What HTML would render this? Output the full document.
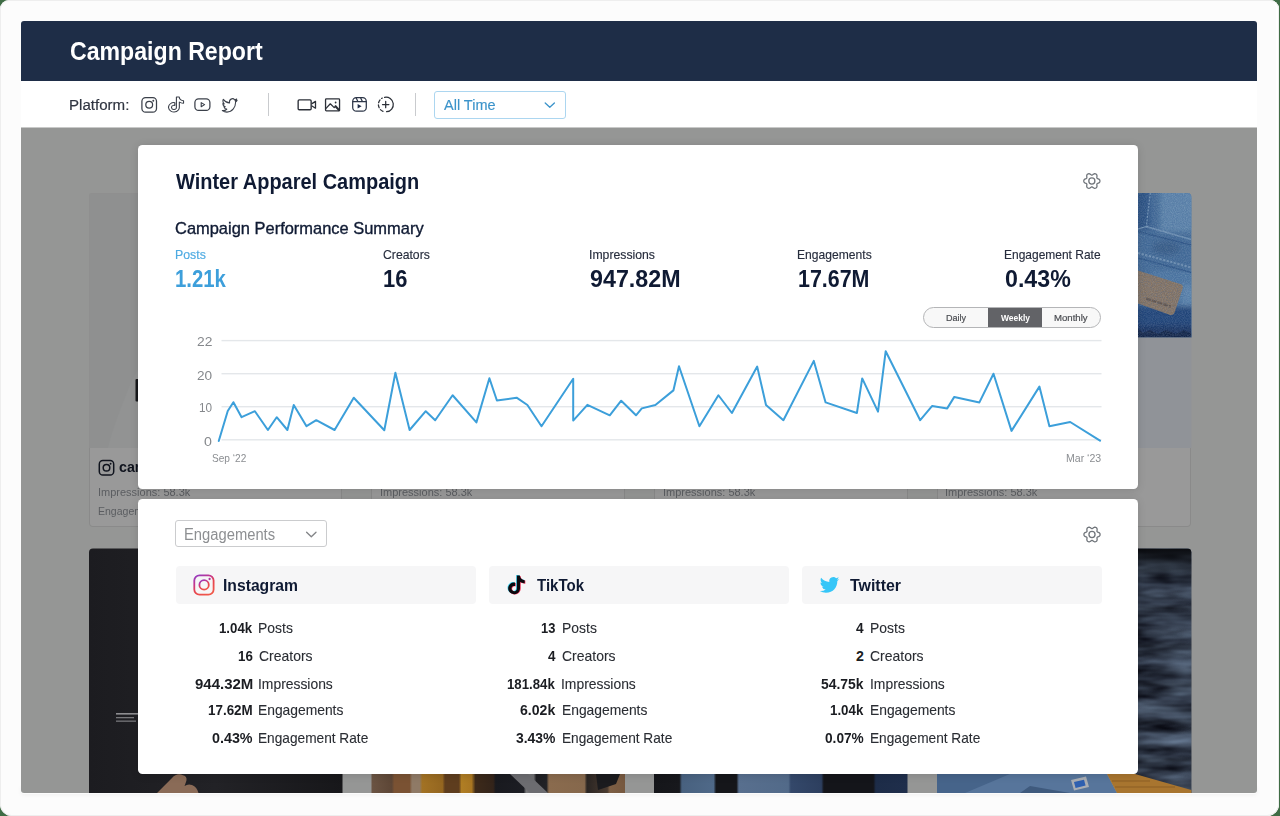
<!DOCTYPE html>
<html lang="en">
<head>
<meta charset="utf-8">
<title>Campaign Report</title>
<style>
html,body{margin:0;padding:0}
body{width:1280px;height:816px;overflow:hidden;background:#3f6c45;font-family:"Liberation Sans",sans-serif;position:relative}
.abs{position:absolute}
.t{position:absolute;white-space:nowrap;line-height:1;transform-origin:0 0;font-weight:400}
svg{position:absolute;left:0;top:0;overflow:visible}
.win{position:absolute;left:0;top:0;width:1279px;height:816px;background:#fcfcfc;border-radius:9px 9px 12px 12px;box-shadow:inset 0 0 0 1px #eeeeee,inset -3px 0 0 0 #ffffff}
.tbar{position:absolute;left:21px;top:81px;width:1236px;height:47px;background:#fff}
.hdr{position:absolute;left:21px;top:21px;width:1236px;height:60.4px;background:#1e2d47;border-radius:3px 3px 0 0}
.shadow{position:absolute;left:21px;top:786px;width:1236px;height:8px;border-radius:0 0 3px 3px;box-shadow:0 1px 4px rgba(0,0,0,.05)}
.panel{position:absolute;left:0;top:0;width:1280px;height:816px;clip-path:inset(127.6px 23px 23px 21px round 0 0 3px 3px)}
.pbg{position:absolute;left:21px;top:127px;width:1236px;height:666px;background:#f8faf8}
.bcard{position:absolute;top:193px;width:253.5px;height:334px;background:#fff;border-radius:4px;box-shadow:inset 0 0 0 1px #e6e7e6;overflow:hidden}
.bimg{position:absolute;left:0;top:0;width:100%;height:255px;background:#edeeee}
.bimg2{position:absolute;top:548.5px;width:253.5px;height:300px;border-radius:4px 4px 0 0;overflow:hidden}
.dim{position:absolute;left:21px;top:127px;width:1236px;height:666px;background:rgba(0,0,0,.4)}
.card{position:absolute;left:138px;width:1000.3px;background:#fff;border-radius:4.5px;box-shadow:0 1px 9px rgba(0,0,0,.13)}
.sel1{position:absolute;left:434px;top:91.2px;width:130px;height:25.4px;border:1px solid #acd6f0;border-radius:3px;background:#fff}
.vdiv{position:absolute;width:1px;background:#c9cbce;top:93px;height:23px}
.tog{position:absolute;left:923.2px;top:307px;width:175.8px;height:18.5px;border:1px solid #b4b5b7;border-radius:10.5px;background:#f8f8f8;overflow:hidden}
.tog i{position:absolute;left:63.6px;top:0;width:54.6px;height:100%;background:#626367}
.sel2{position:absolute;left:174.9px;top:519.9px;width:150.2px;height:25.6px;border:1.3px solid #cbccce;border-radius:3px;background:#fff}
.ph{position:absolute;top:566px;height:38px;width:300px;background:#f6f6f7;border-radius:4px}
</style>
</head>
<body>
<div class="win"></div>
<div class="shadow"></div>
<div class="tbar"></div>
<div class="hdr"></div>
<span class="t" style="left:69.99px;top:37px;line-height:28px;font-size:25.4px;color:#ffffff;transform:scaleX(0.9105);font-weight:700;">Campaign Report</span>
<!-- toolbar -->
<div class="vdiv" style="left:268px"></div>
<div class="vdiv" style="left:415px"></div>
<div class="sel1"></div>
<span class="t" style="left:69.23px;top:96px;line-height:17px;font-size:15.5px;color:#2f3440;transform:scaleX(0.9729);-webkit-text-stroke:0.2px #2f3440;">Platform:</span>
<span class="t" style="left:443.90px;top:97px;line-height:16px;font-size:14.8px;color:#3b93ca;transform:scaleX(0.9796);-webkit-text-stroke:0.15px #3b93ca;">All Time</span>
<svg width="1280" height="816" viewBox="0 0 1280 816"><g fill="none" stroke="#3b404a" stroke-width="1.25" stroke-linecap="round" stroke-linejoin="round"><rect x="141.9" y="97.5" width="14.6" height="14.6" rx="3.7"/><circle cx="149.2" cy="104.8" r="3.4"/><path transform="translate(167.4,97.0) scale(0.72,0.625)" d="M12.525.02c1.31-.02 2.61-.01 3.91-.02.08 1.53.63 3.09 1.75 4.17 1.12 1.11 2.7 1.62 4.24 1.79v4.03c-1.44-.05-2.89-.35-4.2-.97-.57-.26-1.1-.59-1.62-.93-.01 2.92.01 5.84-.02 8.75-.08 1.4-.54 2.79-1.35 3.94-1.31 1.92-3.58 3.17-5.91 3.21-1.43.08-2.86-.31-4.08-1.03-2.02-1.19-3.44-3.37-3.65-5.71-.02-.5-.03-1-.01-1.49.18-1.9 1.12-3.72 2.58-4.96 1.66-1.44 3.98-2.13 6.15-1.72.02 1.48-.04 2.96-.04 4.44-.99-.32-2.15-.23-3.02.37-.63.41-1.11 1.04-1.36 1.75-.21.51-.15 1.07-.14 1.61.24 1.64 1.82 3.02 3.5 2.87 1.12-.01 2.19-.66 2.77-1.61.19-.33.4-.67.41-1.06.1-1.79.06-3.57.07-5.36.01-4.03-.01-8.05.02-12.07z" stroke-width="1.55"/><rect x="194.9" y="98.9" width="15" height="11.5" rx="3.7"/><path transform="translate(222.3,97.2) scale(0.615,0.685)" d="M23.953 4.57a10 10 0 01-2.825.775 4.958 4.958 0 002.163-2.723c-.951.555-2.005.959-3.127 1.184a4.92 4.92 0 00-8.384 4.482C7.69 8.095 4.067 6.13 1.64 3.162a4.822 4.822 0 00-.666 2.475c0 1.71.87 3.213 2.188 4.096a4.904 4.904 0 01-2.228-.616v.06a4.923 4.923 0 003.946 4.827 4.996 4.996 0 01-2.212.085 4.936 4.936 0 004.604 3.417 9.867 9.867 0 01-6.102 2.105c-.39 0-.779-.023-1.17-.067a13.995 13.995 0 007.557 2.209c9.053 0 13.998-7.496 13.998-13.985 0-.21 0-.42-.015-.63A9.935 9.935 0 0024 4.59z" stroke-width="1.7"/><rect x="298.15" y="99.85" width="13" height="9.9" rx="1.1" stroke="#2c3038" stroke-width="1.35"/><path d="M312 103.6 L315.5 101.4 V108.2 L312 106" stroke="#2c3038" fill="none" stroke-width="1.3"/><rect x="325.55" y="98.9" width="14" height="12" rx="0.8" stroke="#2c3038" stroke-width="1.3"/><path d="M325.8 108.6 L330.3 103.8 L334.2 107.6 L335.7 106.1" stroke="#2c3038"/><path d="M335.5 106.2 L339.2 110.2" stroke="#2c3038" stroke-width="2"/><g stroke="#2d3648"><rect x="352.7" y="97.7" width="13.6" height="13.4" rx="3.7"/><path d="M352.9 101.7 H366.1 M356.2 98 L357.9 101.5 M360.7 97.9 L362.4 101.5"/></g><path d="M384.6 97.3 A7.3 7.3 0 1 1 386.6 111.74" stroke="#2c3038"/><path d="M383.0 111.3 A7.3 7.3 0 0 1 382.3 98.05" stroke="#2c3038" stroke-dasharray="3.1 2.1" stroke-dashoffset="0"/><path d="M382.5 104.5 H388.9 M385.7 101.3 V107.7" stroke="#2c3038"/><path d="M545.2 103 L549.8 107.3 L554.4 103" stroke="#3b93ca" stroke-width="1.3"/></g><g fill="#3b404a"><circle cx="153.3" cy="100.7" r="0.95"/><path d="M201.2 102.6 L204.6 104.65 L201.2 106.7 Z" fill="none" stroke="#3b404a" stroke-width="1.1" stroke-linejoin="round"/><circle cx="335.6" cy="102.5" r="0.9" fill="#2c3038"/><path d="M357.6 104.0 L361.6 106.3 L357.6 108.6 Z" fill="#1f2c47"/></g></svg>
<!-- dimmed page behind modal -->
<div class="panel">
<div class="pbg"></div>
<div class="bcard" style="left:88.7px;width:253.8px"><div class="bimg"></div></div><div class="bcard" style="left:371.2px;width:253.8px"><div class="bimg"></div></div><div class="bcard" style="left:653.8px;width:253.8px"><div class="bimg"></div></div><div class="bcard" style="left:936.5px;width:254.5px"><div class="bimg"></div></div><svg width="1280" height="816" viewBox="0 0 1280 816"><g fill="none" stroke="#1c2233" stroke-width="1.5"><rect x="99.3" y="460.6" width="14.4" height="14.4" rx="3.6"/><circle cx="106.5" cy="467.8" r="3.3"/></g><circle cx="110.6" cy="463.7" r="0.95" fill="#1c2233"/><g fill="none" stroke="#1c2233" stroke-width="1.5"><rect x="381.8" y="460.6" width="14.4" height="14.4" rx="3.6"/><circle cx="389.0" cy="467.8" r="3.3"/></g><circle cx="393.09999999999997" cy="463.7" r="0.95" fill="#1c2233"/><g fill="none" stroke="#1c2233" stroke-width="1.5"><rect x="664.4" y="460.6" width="14.4" height="14.4" rx="3.6"/><circle cx="671.5999999999999" cy="467.8" r="3.3"/></g><circle cx="675.6999999999999" cy="463.7" r="0.95" fill="#1c2233"/><g fill="none" stroke="#1c2233" stroke-width="1.5"><rect x="947.1" y="460.6" width="14.4" height="14.4" rx="3.6"/><circle cx="954.3" cy="467.8" r="3.3"/></g><circle cx="958.4" cy="463.7" r="0.95" fill="#1c2233"/></svg><span class="t" style="left:97.62px;top:486px;line-height:12px;font-size:11.2px;color:#989ca2;transform:scaleX(0.9828);">Impressions: 58.3k</span>
<span class="t" style="left:97.75px;top:505px;line-height:12px;font-size:11.2px;color:#989ca2;transform:scaleX(0.9404);">Engagements: 1.2k</span>
<span class="t" style="left:118.94px;top:458px;line-height:17px;font-size:15.4px;color:#1c2233;transform:scaleX(0.9252);font-weight:700;">campaignstyle</span>
<span class="t" style="left:380.12px;top:486px;line-height:12px;font-size:11.2px;color:#989ca2;transform:scaleX(0.9828);">Impressions: 58.3k</span>
<span class="t" style="left:380.25px;top:505px;line-height:12px;font-size:11.2px;color:#989ca2;transform:scaleX(0.9404);">Engagements: 1.2k</span>
<span class="t" style="left:401.44px;top:458px;line-height:17px;font-size:15.4px;color:#1c2233;transform:scaleX(0.9252);font-weight:700;">campaignstyle</span>
<span class="t" style="left:662.62px;top:486px;line-height:12px;font-size:11.2px;color:#989ca2;transform:scaleX(0.9828);">Impressions: 58.3k</span>
<span class="t" style="left:662.75px;top:505px;line-height:12px;font-size:11.2px;color:#989ca2;transform:scaleX(0.9404);">Engagements: 1.2k</span>
<span class="t" style="left:683.94px;top:458px;line-height:17px;font-size:15.4px;color:#1c2233;transform:scaleX(0.9252);font-weight:700;">campaignstyle</span>
<span class="t" style="left:945.12px;top:486px;line-height:12px;font-size:11.2px;color:#989ca2;transform:scaleX(0.9828);">Impressions: 58.3k</span>
<span class="t" style="left:945.25px;top:505px;line-height:12px;font-size:11.2px;color:#989ca2;transform:scaleX(0.9404);">Engagements: 1.2k</span>
<span class="t" style="left:966.44px;top:458px;line-height:17px;font-size:15.4px;color:#1c2233;transform:scaleX(0.9252);font-weight:700;">campaignstyle</span>
<div class="dim"></div>
<svg width="1280" height="816" viewBox="0 0 1280 816"><defs><linearGradient id="dn" x1="0" y1="0" x2="1" y2="1"><stop offset="0" stop-color="#3f6a9c"/><stop offset="0.45" stop-color="#5c89b6"/><stop offset="0.75" stop-color="#4573a5"/><stop offset="1" stop-color="#2c568c"/></linearGradient><linearGradient id="dk" x1="0" y1="0" x2="0" y2="1"><stop offset="0" stop-color="#24467a" stop-opacity="0"/><stop offset="1" stop-color="#1f3f72" stop-opacity="0.95"/></linearGradient><linearGradient id="js" x1="0" y1="0" x2="0" y2="38" gradientUnits="userSpaceOnUse" spreadMethod="repeat"><stop offset="0" stop-color="#10141d"/><stop offset="0.35" stop-color="#2b3547"/><stop offset="0.6" stop-color="#3b4659"/><stop offset="0.85" stop-color="#1b2231"/><stop offset="1" stop-color="#10141d"/></linearGradient><linearGradient id="sh" x1="0" y1="0" x2="1" y2="0"><stop offset="0" stop-color="#1c1c20"/><stop offset="0.5" stop-color="#222226"/><stop offset="1" stop-color="#17171a"/></linearGradient><linearGradient id="p2" x1="0" y1="0" x2="1" y2="0"><stop offset="0" stop-color="#6b5443"/><stop offset="0.08" stop-color="#5d4636"/><stop offset="0.09" stop-color="#7a5233"/><stop offset="0.15" stop-color="#7a5233"/><stop offset="0.16" stop-color="#8f7a66"/><stop offset="0.19" stop-color="#8f7a66"/><stop offset="0.2" stop-color="#a27224"/><stop offset="0.28" stop-color="#946620"/><stop offset="0.29" stop-color="#5e3d1e"/><stop offset="0.345" stop-color="#5e3d1e"/><stop offset="0.355" stop-color="#b07e24"/><stop offset="0.395" stop-color="#a87622"/><stop offset="0.41" stop-color="#3d2a1a"/><stop offset="0.48" stop-color="#33241a"/><stop offset="0.49" stop-color="#191a1f"/><stop offset="0.6" stop-color="#1c1d23"/><stop offset="0.61" stop-color="#777779"/><stop offset="0.64" stop-color="#6d6d70"/><stop offset="0.65" stop-color="#1f1f23"/><stop offset="0.69" stop-color="#222226"/><stop offset="0.7" stop-color="#8a6b4e"/><stop offset="0.84" stop-color="#86684c"/><stop offset="0.85" stop-color="#2a2523"/><stop offset="0.93" stop-color="#4a3b30"/><stop offset="0.94" stop-color="#7d5f45"/><stop offset="1" stop-color="#76583f"/></linearGradient><linearGradient id="p3" x1="0" y1="0" x2="1" y2="0"><stop offset="0" stop-color="#15161a"/><stop offset="0.1" stop-color="#17181c"/><stop offset="0.11" stop-color="#48617f"/><stop offset="0.235" stop-color="#4f6988"/><stop offset="0.245" stop-color="#15161a"/><stop offset="0.325" stop-color="#15161a"/><stop offset="0.335" stop-color="#586f8e"/><stop offset="0.53" stop-color="#526a89"/><stop offset="0.54" stop-color="#34486a"/><stop offset="0.66" stop-color="#2d3f5f"/><stop offset="0.67" stop-color="#14151a"/><stop offset="0.865" stop-color="#14151a"/><stop offset="0.875" stop-color="#1d2c48"/><stop offset="1" stop-color="#1f2e4b"/></linearGradient></defs><rect x="89.5" y="193.5" width="252.5" height="254.5" fill="#8f9090"/><path d="M108 448 C112 430 122 405 132 380 L138 370 V448 Z" fill="#929393"/><rect x="135.5" y="379" width="4" height="22.5" rx="1" fill="#17181b"/><defs><clipPath id="cd"><path d="M1130 193 H1187.3 Q1191.3 193 1191.3 197 V337.5 H1130 Z"/></clipPath><filter id="bl" x="-20%" y="-20%" width="140%" height="140%"><feGaussianBlur stdDeviation="2.5"/></filter><filter id="nz" x="0" y="0" width="100%" height="100%"><feTurbulence type="fractalNoise" baseFrequency="0.9" numOctaves="2" seed="7" result="n"/><feColorMatrix in="n" type="matrix" values="0 0 0 0 1  0 0 0 0 1  0 0 0 0 1  0.9 0 0 0 -0.28"/></filter><filter id="nzd" x="0" y="0" width="100%" height="100%"><feTurbulence type="fractalNoise" baseFrequency="0.8" numOctaves="2" seed="3" result="n"/><feColorMatrix in="n" type="matrix" values="0 0 0 0 0.05  0 0 0 0 0.12  0 0 0 0 0.3  0 0.9 0 0 -0.3"/></filter></defs><g clip-path="url(#cd)"><rect x="1130" y="193" width="62" height="145" fill="#4c78a8"/><g filter="url(#bl)"><rect x="1160" y="190" width="36" height="42" fill="#6c97c0"/><rect x="1134" y="190" width="16" height="40" fill="#315c92"/><ellipse cx="1166" cy="248" rx="14" ry="7" fill="#3f6896"/><rect x="1150" y="270" width="45" height="40" fill="#5986b5"/><rect x="1182" y="285" width="12" height="30" fill="#6b97c2"/><rect x="1130" y="306" width="66" height="36" fill="#244a82"/><rect x="1130" y="326" width="66" height="14" fill="#1a3566"/></g><path d="M1150.3 193 L1146 229" stroke="#86aacd" stroke-width="1.1" stroke-dasharray="2 1.3" fill="none"/><path d="M1138 229 L1148 226" stroke="#86aacd" stroke-width="1.2" fill="none"/><path d="M1146 226.5 L1191.3 239.5" stroke="#8db0d1" stroke-width="1.6" fill="none" opacity="0.75"/><path d="M1138 231.5 L1191.3 245" stroke="#2f5a90" stroke-width="1.5" fill="none" opacity="0.8"/><path d="M1138 253 L1191.3 267.5" stroke="#91b3d3" stroke-width="2" stroke-dasharray="2.4 1.3" fill="none" opacity="0.75"/><path d="M1138 258 L1191.3 272.5" stroke="#315d93" stroke-width="1.5" fill="none" opacity="0.8"/><path d="M1138 270.5 L1181 284.3 Q1183.6 285.5 1182.6 288.4 L1174.6 312.6 Q1173 316 1169.6 314.8 L1138 303.6 Z" fill="#9b8269"/><path d="M1146 298.5 L1171 306.5" stroke="#75604f" stroke-width="2.4" stroke-dasharray="5 1" fill="none"/><path d="M1138 329 L1143 333 L1150 330 L1158 334 L1166 330 L1176 334 L1184 330 L1191.3 333 V337.5 H1138 Z" fill="#122449"/><rect x="1130" y="193" width="62" height="145" fill="#10233f" opacity="0.16"/><rect x="1130" y="193" width="62" height="145" filter="url(#nz)" opacity="0.3"/><rect x="1130" y="193" width="62" height="145" filter="url(#nzd)" opacity="0.65"/></g><rect x="1130" y="337.5" width="61.3" height="110.5" fill="#909398"/><rect x="89" y="548.5" width="253.5" height="250" rx="4" fill="url(#sh)"/><rect x="116" y="713" width="22" height="1.6" fill="#8d8d90"/><rect x="116" y="717" width="18" height="1.3" fill="#77777a"/><rect x="116" y="720.5" width="20" height="1.3" fill="#77777a"/><path d="M157 793 L172 778 Q176 773.5 181 774.5 L185 776 Q187.5 778 186 782 L184.5 786 Q188 783.5 192 785 Q197 787 198.5 793 Z" fill="#8a6b57"/><rect x="371.5" y="548.5" width="253.5" height="250" rx="4" fill="url(#p2)"/><path d="M596 774 H620 L616 784 L598 790 Z" fill="#1b1b1e"/><path d="M510 774 L528 774 L548 793 L530 793 Z" fill="#6c6c70"/><rect x="654" y="548.5" width="253.5" height="250" rx="4" fill="url(#p3)"/><defs><filter id="jn" x="0" y="0" width="100%" height="100%" color-interpolation-filters="sRGB"><feTurbulence type="fractalNoise" baseFrequency="0.018 0.075" numOctaves="3" seed="11"/><feColorMatrix type="matrix" values="0.64 0 0 0 -0.11  0.76 0 0 0 -0.135  0.86 0 0 0 -0.125  0 0 0 0 1"/></filter><clipPath id="cj"><path d="M1130 548.5 H1187.3 Q1191.3 548.5 1191.3 552.5 V800 H1130 Z"/></clipPath><linearGradient id="jt" x1="0" y1="0" x2="0" y2="1"><stop offset="0" stop-color="#07080b" stop-opacity="0.95"/><stop offset="0.06" stop-color="#07080b" stop-opacity="0.5"/><stop offset="0.12" stop-color="#07080b" stop-opacity="0"/></linearGradient></defs><g clip-path="url(#cj)"><rect x="1130" y="548.5" width="62" height="250" fill="url(#js)"/><rect x="1130" y="548.5" width="62" height="250" filter="url(#jn)" opacity="0.75"/><rect x="1130" y="548.5" width="62" height="250" fill="url(#jt)"/></g><path d="M937 774 H1107 L1117 793 H937 Z" fill="#57759b"/><path d="M937 774 H1010 L965 793 H937 Z" fill="#46648a"/><path d="M1030 786 L1070 793 H1020 Z" fill="#3f5a7d"/><path d="M1071 780 L1086 776.5 L1089 787 L1074 790.5 Z" fill="#a9adb3"/><path d="M1074 782 L1084 779.7 L1085.6 785.6 L1075.6 788 Z" fill="#2f60b0"/><path d="M1107 774 H1135 L1191.3 790 V793 H1117 Z" fill="#a8752f"/><path d="M1112 781 L1150 781 M1115 787 L1175 787" stroke="#8b5f24" stroke-width="1" fill="none"/></svg>
<!-- card 1 -->
<div class="card" style="top:145.2px;height:343.8px"></div>
<div class="card" style="top:498.5px;height:275.5px"></div>
<div class="tog"><i></i></div>
<svg width="1280" height="816" viewBox="0 0 1280 816"><rect x="221.5" y="339.9" width="880" height="1.4" fill="#e4e7ea"/><rect x="221.5" y="373.0" width="880" height="1.4" fill="#e4e7ea"/><rect x="221.5" y="406.0" width="880" height="1.4" fill="#e4e7ea"/><rect x="221.5" y="439.1" width="880" height="1.4" fill="#e4e7ea"/><polyline fill="none" stroke="#3c9fda" stroke-width="2" stroke-linejoin="round" stroke-linecap="round" points="218.75,441 227.75,411 233.4,402.2 241.6,417.2 254.9,411.2 267.9,430 276.7,417.2 287.4,430 293.75,405 306.5,426.2 316.25,420.2 334.6,430 353.75,397.7 384.3,430.3 395.4,372.75 409.6,430 425.75,411.2 435.2,420.2 452.6,395.25 476.4,422.4 489.4,378.2 496.9,400.5 516.6,397.7 527.4,405 541.5,426.2 573.2,378.75 573.2,420.6 587.4,404.8 609.75,415.3 621.2,400.7 636,415.3 641.8,408.4 655.4,405 673.4,390.4 679,366.2 699.4,426.2 718.4,395.25 731.9,413 757.2,366.6 766,405 783.4,420.2 813.8,360.9 825.6,402.4 856.9,413 862.2,378.4 878,411.6 885.7,351.2 920.2,420.2 932.2,405.9 947.2,408.4 954.3,396.9 979.4,402.4 993.5,373.7 1011.5,430.9 1039.4,386.6 1049.4,426.2 1070.2,422 1100,440.6"/><polygon points="1099.90,181.00 1099.87,181.53 1099.71,182.03 1099.38,182.50 1098.87,182.88 1098.28,183.18 1097.68,183.42 1097.21,183.64 1096.92,183.93 1096.82,184.32 1096.86,184.84 1096.95,185.47 1096.99,186.14 1096.91,186.77 1096.68,187.29 1096.31,187.68 1095.88,187.97 1095.40,188.21 1094.88,188.32 1094.32,188.27 1093.73,188.02 1093.17,187.65 1092.67,187.26 1092.24,186.96 1091.85,186.85 1091.46,186.96 1091.03,187.26 1090.53,187.65 1089.97,188.02 1089.38,188.27 1088.82,188.32 1088.30,188.21 1087.82,187.97 1087.39,187.68 1087.02,187.29 1086.79,186.77 1086.71,186.14 1086.75,185.47 1086.84,184.84 1086.88,184.32 1086.78,183.93 1086.49,183.64 1086.02,183.42 1085.42,183.18 1084.83,182.88 1084.32,182.50 1083.99,182.03 1083.83,181.53 1083.80,181.00 1083.83,180.47 1083.99,179.97 1084.32,179.50 1084.83,179.12 1085.42,178.82 1086.02,178.58 1086.49,178.36 1086.78,178.07 1086.88,177.68 1086.84,177.16 1086.75,176.53 1086.71,175.86 1086.79,175.23 1087.02,174.71 1087.39,174.32 1087.82,174.03 1088.30,173.79 1088.82,173.68 1089.38,173.73 1089.97,173.98 1090.53,174.35 1091.03,174.74 1091.46,175.04 1091.85,175.15 1092.24,175.04 1092.67,174.74 1093.17,174.35 1093.73,173.98 1094.32,173.73 1094.88,173.68 1095.40,173.79 1095.88,174.03 1096.31,174.32 1096.68,174.71 1096.91,175.23 1096.99,175.86 1096.95,176.53 1096.86,177.16 1096.82,177.68 1096.92,178.07 1097.21,178.36 1097.68,178.58 1098.28,178.82 1098.87,179.12 1099.38,179.50 1099.71,179.97 1099.87,180.47" fill="none" stroke="#70757b" stroke-width="1.3" stroke-linejoin="round"/><circle cx="1091.85" cy="181" r="3.05" fill="none" stroke="#70757b" stroke-width="1.3"/></svg>
<span class="t" style="left:175.90px;top:170px;line-height:24px;font-size:21.4px;color:#0f1a33;transform:scaleX(0.9338);font-weight:700;">Winter Apparel Campaign</span>
<span class="t" style="left:175.09px;top:219px;line-height:18px;font-size:16.2px;color:#0f1a33;transform:scaleX(1.0160);-webkit-text-stroke:0.35px #0f1a33;">Campaign Performance Summary</span>
<span class="t" style="left:174.62px;top:248px;line-height:14px;font-size:12.6px;color:#4fabe2;transform:scaleX(0.9797);-webkit-text-stroke:0.15px #4fabe2;">Posts</span>
<span class="t" style="left:382.72px;top:248px;line-height:14px;font-size:12.6px;color:#272d3d;transform:scaleX(0.9701);-webkit-text-stroke:0.15px #272d3d;">Creators</span>
<span class="t" style="left:589.43px;top:248px;line-height:14px;font-size:12.6px;color:#272d3d;transform:scaleX(0.9711);-webkit-text-stroke:0.15px #272d3d;">Impressions</span>
<span class="t" style="left:797.44px;top:248px;line-height:14px;font-size:12.6px;color:#272d3d;transform:scaleX(0.9613);-webkit-text-stroke:0.15px #272d3d;">Engagements</span>
<span class="t" style="left:1004.45px;top:248px;line-height:14px;font-size:12.6px;color:#272d3d;transform:scaleX(0.9514);-webkit-text-stroke:0.15px #272d3d;">Engagement Rate</span>
<span class="t" style="left:174.76px;top:266px;line-height:26px;font-size:23.0px;color:#3d9fdb;transform:scaleX(0.8851);font-weight:700;">1.21k</span>
<span class="t" style="left:382.67px;top:266px;line-height:26px;font-size:23.0px;color:#0f1a33;transform:scaleX(0.9533);font-weight:700;">16</span>
<span class="t" style="left:590.49px;top:266px;line-height:26px;font-size:23.0px;color:#0f1a33;transform:scaleX(1.0120);font-weight:700;">947.82M</span>
<span class="t" style="left:797.70px;top:266px;line-height:26px;font-size:23.0px;color:#0f1a33;transform:scaleX(0.9315);font-weight:700;">17.67M</span>
<span class="t" style="left:1005.09px;top:266px;line-height:26px;font-size:23.0px;color:#0f1a33;transform:scaleX(1.0084);font-weight:700;">0.43%</span>
<span class="t" style="left:945.83px;top:312px;line-height:11px;font-size:9.5px;color:#4b4d52;transform:scaleX(0.9528);-webkit-text-stroke:0.2px #4b4d52;">Daily</span>
<span class="t" style="left:1000.70px;top:312px;line-height:11px;font-size:9.5px;color:#ffffff;transform:scaleX(0.8900);font-weight:700;">Weekly</span>
<span class="t" style="left:1054.29px;top:312px;line-height:11px;font-size:9.5px;color:#4b4d52;transform:scaleX(1.0118);-webkit-text-stroke:0.2px #4b4d52;">Monthly</span>
<span class="t" style="left:197.08px;top:334px;line-height:15px;font-size:13.4px;color:#85888c;transform:scaleX(1.0328);">22</span>
<span class="t" style="left:197.09px;top:368px;line-height:15px;font-size:13.4px;color:#85888c;transform:scaleX(1.0179);">20</span>
<span class="t" style="left:199.12px;top:400px;line-height:15px;font-size:13.4px;color:#85888c;transform:scaleX(0.8772);">10</span>
<span class="t" style="left:204.37px;top:434px;line-height:15px;font-size:13.4px;color:#85888c;transform:scaleX(1.0615);">0</span>
<span class="t" style="left:211.86px;top:452px;line-height:12px;font-size:11.6px;color:#8b8e92;transform:scaleX(0.8723);">Sep ‘22</span>
<span class="t" style="left:1066.08px;top:452px;line-height:12px;font-size:11.6px;color:#8b8e92;transform:scaleX(0.9108);">Mar ‘23</span>
<!-- card 2 -->
<div class="sel2"></div>
<div class="ph" style="left:175.5px"></div>
<div class="ph" style="left:488.5px"></div>
<div class="ph" style="left:801.5px"></div>
<svg width="1280" height="816" viewBox="0 0 1280 816"><polygon points="1100.05,534.50 1100.02,535.03 1099.86,535.53 1099.53,536.00 1099.02,536.38 1098.43,536.68 1097.83,536.92 1097.36,537.14 1097.07,537.42 1096.97,537.82 1097.01,538.34 1097.10,538.97 1097.14,539.64 1097.06,540.27 1096.83,540.79 1096.46,541.18 1096.03,541.47 1095.55,541.71 1095.03,541.82 1094.47,541.77 1093.88,541.52 1093.32,541.15 1092.82,540.76 1092.39,540.46 1092.00,540.35 1091.61,540.46 1091.18,540.76 1090.68,541.15 1090.12,541.52 1089.53,541.77 1088.97,541.82 1088.45,541.71 1087.97,541.47 1087.54,541.18 1087.17,540.79 1086.94,540.27 1086.86,539.64 1086.90,538.97 1086.99,538.34 1087.03,537.82 1086.93,537.42 1086.64,537.14 1086.17,536.92 1085.57,536.68 1084.98,536.38 1084.47,536.00 1084.14,535.53 1083.98,535.03 1083.95,534.50 1083.98,533.97 1084.14,533.47 1084.47,533.00 1084.98,532.62 1085.57,532.32 1086.17,532.08 1086.64,531.86 1086.93,531.58 1087.03,531.18 1086.99,530.66 1086.90,530.03 1086.86,529.36 1086.94,528.73 1087.17,528.21 1087.54,527.82 1087.97,527.53 1088.45,527.29 1088.97,527.18 1089.53,527.23 1090.12,527.48 1090.68,527.85 1091.18,528.24 1091.61,528.54 1092.00,528.65 1092.39,528.54 1092.82,528.24 1093.32,527.85 1093.88,527.48 1094.47,527.23 1095.03,527.18 1095.55,527.29 1096.03,527.53 1096.46,527.82 1096.83,528.21 1097.06,528.73 1097.14,529.36 1097.10,530.03 1097.01,530.66 1096.97,531.18 1097.07,531.58 1097.36,531.86 1097.83,532.08 1098.43,532.32 1099.02,532.62 1099.53,533.00 1099.86,533.47 1100.02,533.97" fill="none" stroke="#70757b" stroke-width="1.3" stroke-linejoin="round"/><circle cx="1092" cy="534.5" r="3.05" fill="none" stroke="#70757b" stroke-width="1.3"/><path d="M306.6 532.2 L311.3 536.8 L316 532.2" fill="none" stroke="#838588" stroke-width="1.35" stroke-linecap="round" stroke-linejoin="round"/><defs><linearGradient id="ig" x1="0.2" y1="0" x2="0.75" y2="1"><stop offset="0" stop-color="#9a3abb"/><stop offset="0.3" stop-color="#c5368a"/><stop offset="0.55" stop-color="#e6434f"/><stop offset="1" stop-color="#f0584a"/></linearGradient></defs><g fill="none" stroke="url(#ig)" stroke-width="1.8"><rect x="194.3" y="575.3" width="19.3" height="19.3" rx="5.2"/><circle cx="204.1" cy="584.9" r="4.7"/></g><circle cx="209.6" cy="579.0" r="1.15" fill="#b0379f"/><path transform="translate(506.3,575.1) scale(0.79,0.775)" d="M12.525.02c1.31-.02 2.61-.01 3.91-.02.08 1.53.63 3.09 1.75 4.17 1.12 1.11 2.7 1.62 4.24 1.79v4.03c-1.44-.05-2.89-.35-4.2-.97-.57-.26-1.1-.59-1.62-.93-.01 2.92.01 5.84-.02 8.75-.08 1.4-.54 2.79-1.35 3.94-1.31 1.92-3.58 3.17-5.91 3.21-1.43.08-2.86-.31-4.08-1.03-2.02-1.19-3.44-3.37-3.65-5.71-.02-.5-.03-1-.01-1.49.18-1.9 1.12-3.72 2.58-4.96 1.66-1.44 3.98-2.13 6.15-1.72.02 1.48-.04 2.96-.04 4.44-.99-.32-2.15-.23-3.02.37-.63.41-1.11 1.04-1.36 1.75-.21.51-.15 1.07-.14 1.61.24 1.64 1.82 3.02 3.5 2.87 1.12-.01 2.19-.66 2.77-1.61.19-.33.4-.67.41-1.06.1-1.79.06-3.57.07-5.36.01-4.03-.01-8.05.02-12.07z" fill="#3bd3f2"/><path transform="translate(507.6,576.0) scale(0.79,0.775)" d="M12.525.02c1.31-.02 2.61-.01 3.91-.02.08 1.53.63 3.09 1.75 4.17 1.12 1.11 2.7 1.62 4.24 1.79v4.03c-1.44-.05-2.89-.35-4.2-.97-.57-.26-1.1-.59-1.62-.93-.01 2.92.01 5.84-.02 8.75-.08 1.4-.54 2.79-1.35 3.94-1.31 1.92-3.58 3.17-5.91 3.21-1.43.08-2.86-.31-4.08-1.03-2.02-1.19-3.44-3.37-3.65-5.71-.02-.5-.03-1-.01-1.49.18-1.9 1.12-3.72 2.58-4.96 1.66-1.44 3.98-2.13 6.15-1.72.02 1.48-.04 2.96-.04 4.44-.99-.32-2.15-.23-3.02.37-.63.41-1.11 1.04-1.36 1.75-.21.51-.15 1.07-.14 1.61.24 1.64 1.82 3.02 3.5 2.87 1.12-.01 2.19-.66 2.77-1.61.19-.33.4-.67.41-1.06.1-1.79.06-3.57.07-5.36.01-4.03-.01-8.05.02-12.07z" fill="#f4335a"/><path transform="translate(506.95,575.55) scale(0.79,0.775)" d="M12.525.02c1.31-.02 2.61-.01 3.91-.02.08 1.53.63 3.09 1.75 4.17 1.12 1.11 2.7 1.62 4.24 1.79v4.03c-1.44-.05-2.89-.35-4.2-.97-.57-.26-1.1-.59-1.62-.93-.01 2.92.01 5.84-.02 8.75-.08 1.4-.54 2.79-1.35 3.94-1.31 1.92-3.58 3.17-5.91 3.21-1.43.08-2.86-.31-4.08-1.03-2.02-1.19-3.44-3.37-3.65-5.71-.02-.5-.03-1-.01-1.49.18-1.9 1.12-3.72 2.58-4.96 1.66-1.44 3.98-2.13 6.15-1.72.02 1.48-.04 2.96-.04 4.44-.99-.32-2.15-.23-3.02.37-.63.41-1.11 1.04-1.36 1.75-.21.51-.15 1.07-.14 1.61.24 1.64 1.82 3.02 3.5 2.87 1.12-.01 2.19-.66 2.77-1.61.19-.33.4-.67.41-1.06.1-1.79.06-3.57.07-5.36.01-4.03-.01-8.05.02-12.07z" fill="#0a0a0f"/><path transform="translate(819.8,575.2) scale(0.812)" d="M23.953 4.57a10 10 0 01-2.825.775 4.958 4.958 0 002.163-2.723c-.951.555-2.005.959-3.127 1.184a4.92 4.92 0 00-8.384 4.482C7.69 8.095 4.067 6.13 1.64 3.162a4.822 4.822 0 00-.666 2.475c0 1.71.87 3.213 2.188 4.096a4.904 4.904 0 01-2.228-.616v.06a4.923 4.923 0 003.946 4.827 4.996 4.996 0 01-2.212.085 4.936 4.936 0 004.604 3.417 9.867 9.867 0 01-6.102 2.105c-.39 0-.779-.023-1.17-.067a13.995 13.995 0 007.557 2.209c9.053 0 13.998-7.496 13.998-13.985 0-.21 0-.42-.015-.63A9.935 9.935 0 0024 4.59z" fill="#36c6f8"/></svg>
<span class="t" style="left:183.60px;top:526px;line-height:17px;font-size:16.0px;color:#8d8f92;transform:scaleX(0.9223);">Engagements</span>
<span class="t" style="left:222.94px;top:576px;line-height:18px;font-size:16.4px;color:#0f1a33;transform:scaleX(0.9568);font-weight:700;">Instagram</span>
<span class="t" style="left:537.11px;top:576px;line-height:18px;font-size:16.4px;color:#0f1a33;transform:scaleX(0.9168);font-weight:700;">TikTok</span>
<span class="t" style="left:850.00px;top:576px;line-height:18px;font-size:16.4px;color:#0f1a33;transform:scaleX(0.9721);font-weight:700;">Twitter</span>
<span class="t" style="left:218.75px;top:620px;line-height:16px;font-size:14.2px;color:#1b1d22;transform:scaleX(0.9329);font-weight:700;">1.04k</span>
<span class="t" style="left:258.32px;top:620px;line-height:16px;font-size:14.2px;color:#2a2d33;transform:scaleX(0.9819);-webkit-text-stroke:0.1px #2a2d33;">Posts</span>
<span class="t" style="left:237.65px;top:648px;line-height:16px;font-size:14.2px;color:#1b1d22;transform:scaleX(0.9381);font-weight:700;">16</span>
<span class="t" style="left:258.71px;top:648px;line-height:16px;font-size:14.2px;color:#2a2d33;transform:scaleX(0.9840);-webkit-text-stroke:0.1px #2a2d33;">Creators</span>
<span class="t" style="left:194.58px;top:676px;line-height:16px;font-size:14.2px;color:#1b1d22;transform:scaleX(1.0569);font-weight:700;">944.32M</span>
<span class="t" style="left:258.13px;top:676px;line-height:16px;font-size:14.2px;color:#2a2d33;transform:scaleX(0.9780);-webkit-text-stroke:0.1px #2a2d33;">Impressions</span>
<span class="t" style="left:208.14px;top:702px;line-height:16px;font-size:14.2px;color:#1b1d22;transform:scaleX(0.9445);font-weight:700;">17.62M</span>
<span class="t" style="left:258.33px;top:702px;line-height:16px;font-size:14.2px;color:#2a2d33;transform:scaleX(0.9753);-webkit-text-stroke:0.1px #2a2d33;">Engagements</span>
<span class="t" style="left:211.70px;top:730px;line-height:16px;font-size:14.2px;color:#1b1d22;transform:scaleX(1.0092);font-weight:700;">0.43%</span>
<span class="t" style="left:258.34px;top:730px;line-height:16px;font-size:14.2px;color:#2a2d33;transform:scaleX(0.9639);-webkit-text-stroke:0.1px #2a2d33;">Engagement Rate</span>
<span class="t" style="left:541.27px;top:620px;line-height:16px;font-size:14.2px;color:#1b1d22;transform:scaleX(0.9105);font-weight:700;">13</span>
<span class="t" style="left:561.52px;top:620px;line-height:16px;font-size:14.2px;color:#2a2d33;transform:scaleX(0.9819);-webkit-text-stroke:0.1px #2a2d33;">Posts</span>
<span class="t" style="left:547.71px;top:648px;line-height:16px;font-size:14.2px;color:#1b1d22;transform:scaleX(0.9481);font-weight:700;">4</span>
<span class="t" style="left:561.91px;top:648px;line-height:16px;font-size:14.2px;color:#2a2d33;transform:scaleX(0.9840);-webkit-text-stroke:0.1px #2a2d33;">Creators</span>
<span class="t" style="left:507.25px;top:676px;line-height:16px;font-size:14.2px;color:#1b1d22;transform:scaleX(0.9322);font-weight:700;">181.84k</span>
<span class="t" style="left:561.33px;top:676px;line-height:16px;font-size:14.2px;color:#2a2d33;transform:scaleX(0.9780);-webkit-text-stroke:0.1px #2a2d33;">Impressions</span>
<span class="t" style="left:519.80px;top:702px;line-height:16px;font-size:14.2px;color:#1b1d22;transform:scaleX(0.9932);font-weight:700;">6.02k</span>
<span class="t" style="left:561.53px;top:702px;line-height:16px;font-size:14.2px;color:#2a2d33;transform:scaleX(0.9753);-webkit-text-stroke:0.1px #2a2d33;">Engagements</span>
<span class="t" style="left:516.01px;top:730px;line-height:16px;font-size:14.2px;color:#1b1d22;transform:scaleX(0.9814);font-weight:700;">3.43%</span>
<span class="t" style="left:561.54px;top:730px;line-height:16px;font-size:14.2px;color:#2a2d33;transform:scaleX(0.9639);-webkit-text-stroke:0.1px #2a2d33;">Engagement Rate</span>
<span class="t" style="left:855.81px;top:620px;line-height:16px;font-size:14.2px;color:#1b1d22;transform:scaleX(0.9610);font-weight:700;">4</span>
<span class="t" style="left:869.72px;top:620px;line-height:16px;font-size:14.2px;color:#2a2d33;transform:scaleX(0.9819);-webkit-text-stroke:0.1px #2a2d33;">Posts</span>
<span class="t" style="left:856.00px;top:648px;line-height:16px;font-size:14.2px;color:#1b1d22;transform:scaleX(1.0000);font-weight:700;">2</span>
<span class="t" style="left:870.11px;top:648px;line-height:16px;font-size:14.2px;color:#2a2d33;transform:scaleX(0.9840);-webkit-text-stroke:0.1px #2a2d33;">Creators</span>
<span class="t" style="left:820.71px;top:676px;line-height:16px;font-size:14.2px;color:#1b1d22;transform:scaleX(0.9806);font-weight:700;">54.75k</span>
<span class="t" style="left:869.53px;top:676px;line-height:16px;font-size:14.2px;color:#2a2d33;transform:scaleX(0.9780);-webkit-text-stroke:0.1px #2a2d33;">Impressions</span>
<span class="t" style="left:829.95px;top:702px;line-height:16px;font-size:14.2px;color:#1b1d22;transform:scaleX(0.9386);font-weight:700;">1.04k</span>
<span class="t" style="left:869.73px;top:702px;line-height:16px;font-size:14.2px;color:#2a2d33;transform:scaleX(0.9753);-webkit-text-stroke:0.1px #2a2d33;">Engagements</span>
<span class="t" style="left:824.92px;top:730px;line-height:16px;font-size:14.2px;color:#1b1d22;transform:scaleX(0.9636);font-weight:700;">0.07%</span>
<span class="t" style="left:869.74px;top:730px;line-height:16px;font-size:14.2px;color:#2a2d33;transform:scaleX(0.9639);-webkit-text-stroke:0.1px #2a2d33;">Engagement Rate</span>
</div>
</body>
</html>
